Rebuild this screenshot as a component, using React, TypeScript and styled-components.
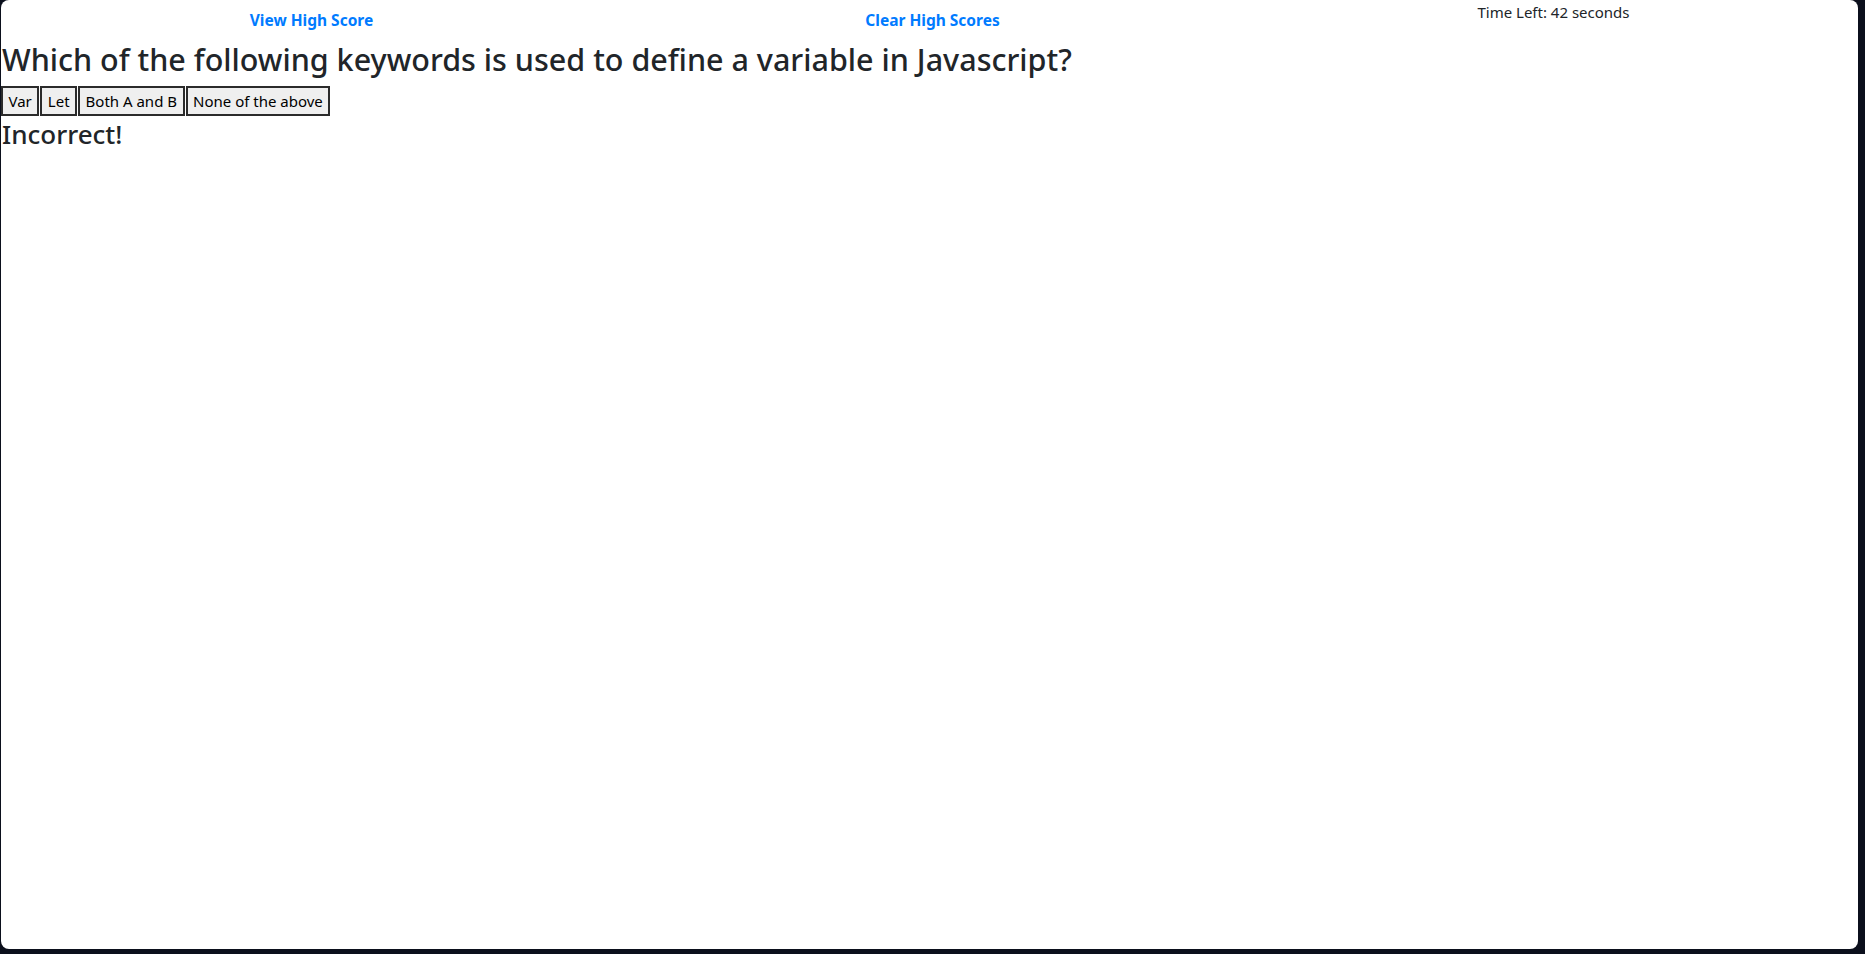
import React from "react";
import styled, { createGlobalStyle } from "styled-components";

const GlobalStyle = createGlobalStyle`
  html, body {
    margin: 0;
    padding: 0;
    background: #0b0f1c;
  }
  body {
    font-family: "Noto Sans", "Open Sans", Arial, sans-serif;
    font-size: 16px;
    line-height: 1.5;
    color: #212529;
  }
  * { box-sizing: border-box; }
`;

const Frame = styled.div`
  height: 100vh;
  display: flex;
  padding: 0 7px 5px 1px;
  background: #0b0f1c;
`;

const Panel = styled.main`
  flex: 1;
  background: #ffffff;
  border-radius: 8px;
  display: flex;
  flex-direction: column;
  align-items: flex-start;
`;

const Header = styled.header`
  display: grid;
  grid-template-columns: repeat(3, 1fr);
  align-self: stretch;
  height: 40px;
  margin-right: -6px;
  text-align: center;
  align-items: start;
`;

const HeaderLink = styled.button`
  justify-self: center;
  font-family: inherit;
  font-size: 15.5px;
  font-weight: 700;
  line-height: 24px;
  color: #007bff;
  background: transparent;
  border: 1px solid transparent;
  padding: 7px 12px 5px;
  cursor: pointer;
`;

const Timer = styled.div`
  justify-self: center;
  font-size: 15px;
  line-height: 24px;
  color: #212529;
`;

const Question = styled.h2`
  margin: 0 0 8px;
  padding-left: 1px;
  font-size: 30.5px;
  font-weight: 500;
  line-height: 38px;
  color: #212529;
`;

const Choices = styled.div`
  display: flex;
  gap: 1px;
`;

const Choice = styled.button`
  font-family: inherit;
  font-size: 15px;
  line-height: 24px;
  color: #000;
  background: #efefef;
  border: 2px solid #2b2b2b;
  padding: 1px 5.5px;
  margin: 0;
  cursor: pointer;
`;

const Result = styled.h3`
  margin: 2px 0 0;
  padding-left: 1px;
  font-size: 26px;
  font-weight: 500;
  line-height: 33.6px;
  color: #212529;
`;

const choices = ["Var", "Let", "Both A and B", "None of the above"];

export default function App() {
  return (
    <>
      <GlobalStyle />
      <Frame>
        <Panel>
          <Header>
            <HeaderLink>View High Score</HeaderLink>
            <HeaderLink>Clear High Scores</HeaderLink>
            <Timer>Time Left: 42 seconds</Timer>
          </Header>
          <Question>
            Which of the following keywords is used to define a variable in Javascript?
          </Question>
          <Choices>
            {choices.map((c) => (
              <Choice key={c}>{c}</Choice>
            ))}
          </Choices>
          <Result>Incorrect!</Result>
        </Panel>
      </Frame>
    </>
  );
}
